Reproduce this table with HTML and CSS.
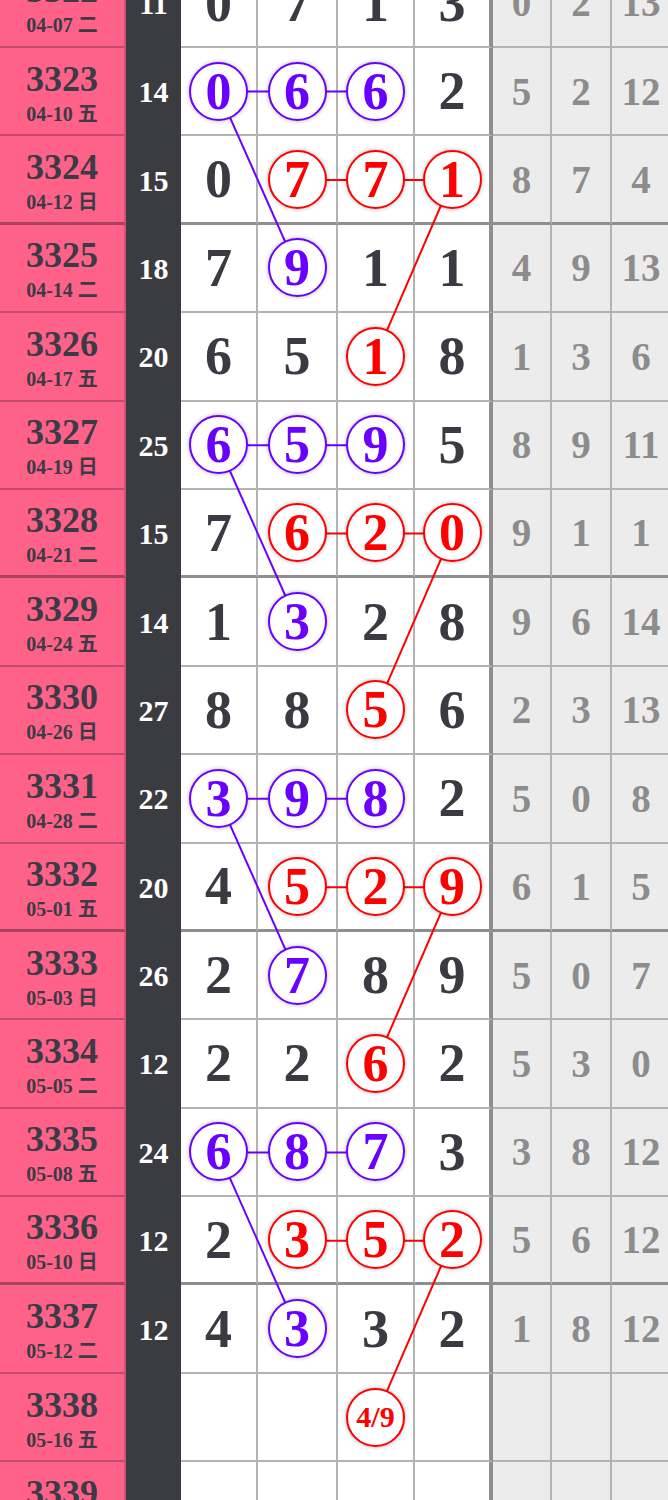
FILE: index.html
```html
<!DOCTYPE html>
<html lang="zh">
<head>
  <meta charset="UTF-8">
  <meta name="viewport" content="width=device-width, initial-scale=1.0">
  <title>走势图</title>
  <link rel="stylesheet" href="styles.css">
</head>
<body>

  <div class="board">

    <!-- lines between the balls -->
    <svg class="links" width="672" height="1592" viewBox="0 0 672 1592">
      <g class="blue-line">
        <line x1="218.5" y1="131.6" x2="375.5" y2="131.6"/>
        <line x1="218.5" y1="131.6" x2="297" y2="308.4"/>
        <line x1="218.5" y1="485.2" x2="375.5" y2="485.2"/>
        <line x1="218.5" y1="485.2" x2="297" y2="662"/>
        <line x1="218.5" y1="838.8" x2="375.5" y2="838.8"/>
        <line x1="218.5" y1="838.8" x2="297" y2="1015.6"/>
        <line x1="218.5" y1="1192.4" x2="375.5" y2="1192.4"/>
        <line x1="218.5" y1="1192.4" x2="297" y2="1369.2"/>
      </g>
      <g class="red-line">
        <line x1="297" y1="220" x2="452" y2="220"/>
        <line x1="452" y1="220" x2="375.5" y2="396.8"/>
        <line x1="297" y1="573.6" x2="452" y2="573.6"/>
        <line x1="452" y1="573.6" x2="375.5" y2="750.4"/>
        <line x1="297" y1="927.2" x2="452" y2="927.2"/>
        <line x1="452" y1="927.2" x2="375.5" y2="1104"/>
        <line x1="297" y1="1280.8" x2="452" y2="1280.8"/>
        <line x1="452" y1="1280.8" x2="375.5" y2="1457.6"/>
      </g>
    </svg>

    <div class="row">
      <div class="no"><b>3322</b><span>04-07 二</span></div>
      <div class="sum">11</div>
      <div class="d">0</div><div class="d">7</div><div class="d">1</div><div class="d">3</div>
      <div class="g">0</div><div class="g">2</div><div class="g">13</div>
    </div>

    <div class="row">
      <div class="no"><b>3323</b><span>04-10 五</span></div>
      <div class="sum">14</div>
      <div class="d"><span class="ball blue">0</span></div>
      <div class="d"><span class="ball blue">6</span></div>
      <div class="d"><span class="ball blue">6</span></div>
      <div class="d">2</div>
      <div class="g">5</div><div class="g">2</div><div class="g">12</div>
    </div>

    <div class="row sep">
      <div class="no"><b>3324</b><span>04-12 日</span></div>
      <div class="sum">15</div>
      <div class="d">0</div>
      <div class="d"><span class="ball red">7</span></div>
      <div class="d"><span class="ball red">7</span></div>
      <div class="d"><span class="ball red">1</span></div>
      <div class="g">8</div><div class="g">7</div><div class="g">4</div>
    </div>

    <div class="row">
      <div class="no"><b>3325</b><span>04-14 二</span></div>
      <div class="sum">18</div>
      <div class="d">7</div>
      <div class="d"><span class="ball blue">9</span></div>
      <div class="d">1</div><div class="d">1</div>
      <div class="g">4</div><div class="g">9</div><div class="g">13</div>
    </div>

    <div class="row">
      <div class="no"><b>3326</b><span>04-17 五</span></div>
      <div class="sum">20</div>
      <div class="d">6</div><div class="d">5</div>
      <div class="d"><span class="ball red">1</span></div>
      <div class="d">8</div>
      <div class="g">1</div><div class="g">3</div><div class="g">6</div>
    </div>

    <div class="row">
      <div class="no"><b>3327</b><span>04-19 日</span></div>
      <div class="sum">25</div>
      <div class="d"><span class="ball blue">6</span></div>
      <div class="d"><span class="ball blue">5</span></div>
      <div class="d"><span class="ball blue">9</span></div>
      <div class="d">5</div>
      <div class="g">8</div><div class="g">9</div><div class="g">11</div>
    </div>

    <div class="row sep">
      <div class="no"><b>3328</b><span>04-21 二</span></div>
      <div class="sum">15</div>
      <div class="d">7</div>
      <div class="d"><span class="ball red">6</span></div>
      <div class="d"><span class="ball red">2</span></div>
      <div class="d"><span class="ball red">0</span></div>
      <div class="g">9</div><div class="g">1</div><div class="g">1</div>
    </div>

    <div class="row">
      <div class="no"><b>3329</b><span>04-24 五</span></div>
      <div class="sum">14</div>
      <div class="d">1</div>
      <div class="d"><span class="ball blue">3</span></div>
      <div class="d">2</div><div class="d">8</div>
      <div class="g">9</div><div class="g">6</div><div class="g">14</div>
    </div>

    <div class="row">
      <div class="no"><b>3330</b><span>04-26 日</span></div>
      <div class="sum">27</div>
      <div class="d">8</div><div class="d">8</div>
      <div class="d"><span class="ball red">5</span></div>
      <div class="d">6</div>
      <div class="g">2</div><div class="g">3</div><div class="g">13</div>
    </div>

    <div class="row">
      <div class="no"><b>3331</b><span>04-28 二</span></div>
      <div class="sum">22</div>
      <div class="d"><span class="ball blue">3</span></div>
      <div class="d"><span class="ball blue">9</span></div>
      <div class="d"><span class="ball blue">8</span></div>
      <div class="d">2</div>
      <div class="g">5</div><div class="g">0</div><div class="g">8</div>
    </div>

    <div class="row sep">
      <div class="no"><b>3332</b><span>05-01 五</span></div>
      <div class="sum">20</div>
      <div class="d">4</div>
      <div class="d"><span class="ball red">5</span></div>
      <div class="d"><span class="ball red">2</span></div>
      <div class="d"><span class="ball red">9</span></div>
      <div class="g">6</div><div class="g">1</div><div class="g">5</div>
    </div>

    <div class="row">
      <div class="no"><b>3333</b><span>05-03 日</span></div>
      <div class="sum">26</div>
      <div class="d">2</div>
      <div class="d"><span class="ball blue">7</span></div>
      <div class="d">8</div><div class="d">9</div>
      <div class="g">5</div><div class="g">0</div><div class="g">7</div>
    </div>

    <div class="row">
      <div class="no"><b>3334</b><span>05-05 二</span></div>
      <div class="sum">12</div>
      <div class="d">2</div><div class="d">2</div>
      <div class="d"><span class="ball red">6</span></div>
      <div class="d">2</div>
      <div class="g">5</div><div class="g">3</div><div class="g">0</div>
    </div>

    <div class="row">
      <div class="no"><b>3335</b><span>05-08 五</span></div>
      <div class="sum">24</div>
      <div class="d"><span class="ball blue">6</span></div>
      <div class="d"><span class="ball blue">8</span></div>
      <div class="d"><span class="ball blue">7</span></div>
      <div class="d">3</div>
      <div class="g">3</div><div class="g">8</div><div class="g">12</div>
    </div>

    <div class="row sep">
      <div class="no"><b>3336</b><span>05-10 日</span></div>
      <div class="sum">12</div>
      <div class="d">2</div>
      <div class="d"><span class="ball red">3</span></div>
      <div class="d"><span class="ball red">5</span></div>
      <div class="d"><span class="ball red">2</span></div>
      <div class="g">5</div><div class="g">6</div><div class="g">12</div>
    </div>

    <div class="row">
      <div class="no"><b>3337</b><span>05-12 二</span></div>
      <div class="sum">12</div>
      <div class="d">4</div>
      <div class="d"><span class="ball blue">3</span></div>
      <div class="d">3</div><div class="d">2</div>
      <div class="g">1</div><div class="g">8</div><div class="g">12</div>
    </div>

    <div class="row">
      <div class="no"><b>3338</b><span>05-16 五</span></div>
      <div class="sum"></div>
      <div class="d"></div><div class="d"></div>
      <div class="d"><span class="ball red small">4/9</span></div>
      <div class="d"></div>
      <div class="g"></div><div class="g"></div><div class="g"></div>
    </div>

    <div class="row">
      <div class="no"><b>3339</b><span>05-19 日</span></div>
      <div class="sum"></div>
      <div class="d"></div><div class="d"></div><div class="d"></div><div class="d"></div>
      <div class="g"></div><div class="g"></div><div class="g"></div>
    </div>

  </div>

</body>
</html>
```

FILE: styles.css
```css
body {
  margin: 0;
  height: 1500px;
  overflow: hidden;
  background: #fff;
  font-family: "Liberation Serif", "Noto Sans CJK SC", serif;
  font-weight: bold;
}
.board {
  position: relative;
  width: 672px;
  margin-top: -40.4px;
}
.row {
  display: grid;
  grid-template-columns: 126px 55px 77px 80px 77px 78px 59px 60px 60px;
  height: 88.4px;
}
.row > div {
  display: flex;
  align-items: center;
  justify-content: center;
  box-sizing: border-box;
  border-bottom: 2px solid #b3b3b3;
}
.row.sep > div {
  border-bottom: 3px solid #8e8e8e;
}

/* issue number + date */
.row > .no {
  flex-direction: column;
  padding-top: 4px;
  background: #ff6289;
  color: #3c3b45;
  border-right: 2px solid #d5517a;
  border-bottom-color: #c44b6d;
}
.row.sep > .no {
  border-bottom-color: #a8425f;
}
.no b {
  font-size: 36px;
  line-height: 34px;
}
.no span {
  font-size: 20px;
  line-height: 22px;
  margin-top: 7px;
}

/* sum column */
.row > .sum,
.row.sep > .sum {
  background: #3b3b42;
  color: #fff;
  font-size: 30px;
  border-bottom: none;
}

/* drawn digits */
.d {
  color: #3a3a42;
  font-size: 54px;
  border-right: 2px solid #b3b3b3;
}
.d:nth-child(6) {
  border-right: 4px solid #8e8e8e;
}

/* remaining columns */
.g {
  background: #ececec;
  color: #8c8c8c;
  font-size: 39px;
  border-right: 2px solid #b3b3b3;
}

.ball {
  position: relative;
  z-index: 2;
  display: flex;
  align-items: center;
  justify-content: center;
  width: 59px;
  height: 59px;
  box-sizing: border-box;
  border: 2px solid;
  border-radius: 50%;
  background: #fff;
  font-size: 52px;
  box-shadow: 0 0 4px rgba(0, 0, 0, 0.3);
}
.ball.blue { color: #6a00ff; }
.ball.red { color: #ff0000; }
.ball.small { font-size: 30px; }

.links {
  position: absolute;
  top: 0;
  left: 0;
  z-index: 1;
  pointer-events: none;
}
.links line { stroke-width: 2; }
.blue-line { stroke: #6a00ff; }
.red-line { stroke: #ff0000; }
```
